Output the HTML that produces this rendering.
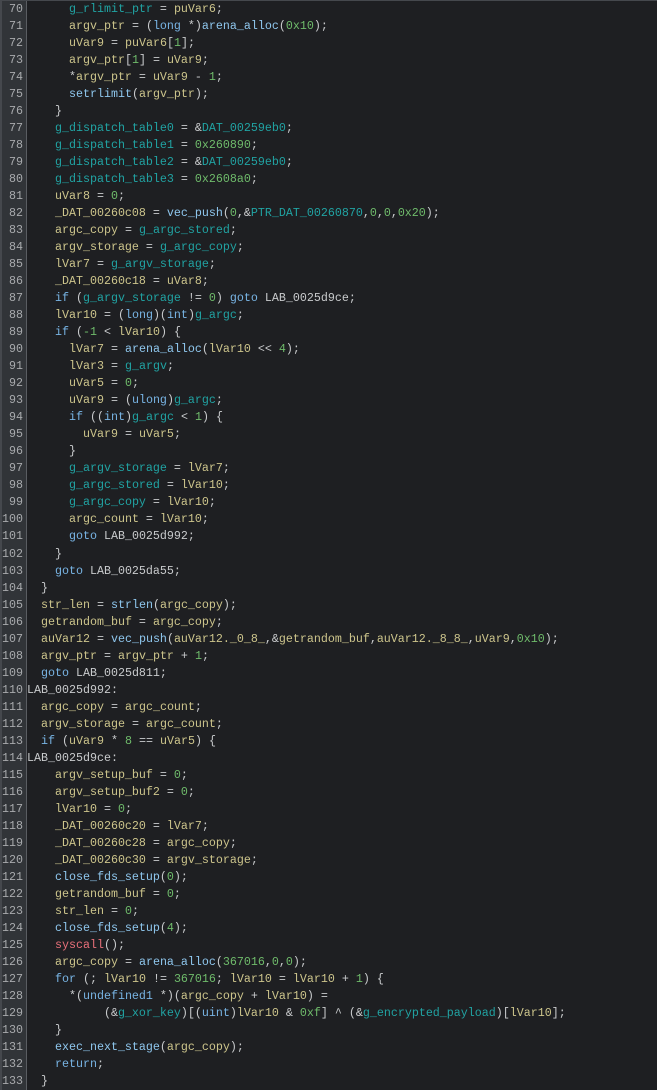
<!DOCTYPE html>
<html><head><meta charset="utf-8"><style>
html,body{margin:0;padding:0;background:#1e1f22;width:657px;height:1090px;overflow:hidden}
#g{position:absolute;left:0;top:0;width:24px;height:1090px;background:#313438;border-left:2px solid #45484d;border-right:1px solid #5a5d62;box-sizing:content-box}
#wrap{position:absolute;left:0;top:1px;font-family:"Liberation Mono",monospace;font-size:11.67px;line-height:17.02px}
.l{display:flex;height:17.02px;white-space:pre}
.n{width:23px;text-align:right;color:#a9abae;padding-right:4px;flex:none}
.c{color:#c9cbcd;white-space:pre}
.v{color:#cdc58c}.f{color:#8fc7ee}.k{color:#78b4e4}.g{color:#21a3a3}.m{color:#6fbb6b}.r{color:#e8707a}
#top{position:absolute;left:0;top:0;width:657px;height:1px;background:#45484d}
</style></head><body>
<div id="g"></div><div id="top"></div>
<div id="wrap"><div class="l"><span class="n">70</span><span class="c">      <span class="g">g_rlimit_ptr</span> = <span class="v">puVar6</span>;</span></div><div class="l"><span class="n">71</span><span class="c">      <span class="v">argv_ptr</span> = (<span class="k">long</span> *)<span class="f">arena_alloc</span>(<span class="m">0x10</span>);</span></div><div class="l"><span class="n">72</span><span class="c">      <span class="v">uVar9</span> = <span class="v">puVar6</span>[<span class="m">1</span>];</span></div><div class="l"><span class="n">73</span><span class="c">      <span class="v">argv_ptr</span>[<span class="m">1</span>] = <span class="v">uVar9</span>;</span></div><div class="l"><span class="n">74</span><span class="c">      *<span class="v">argv_ptr</span> = <span class="v">uVar9</span> - <span class="m">1</span>;</span></div><div class="l"><span class="n">75</span><span class="c">      <span class="f">setrlimit</span>(<span class="v">argv_ptr</span>);</span></div><div class="l"><span class="n">76</span><span class="c">    }</span></div><div class="l"><span class="n">77</span><span class="c">    <span class="g">g_dispatch_table0</span> = &amp;<span class="g">DAT_00259eb0</span>;</span></div><div class="l"><span class="n">78</span><span class="c">    <span class="g">g_dispatch_table1</span> = <span class="m">0x260890</span>;</span></div><div class="l"><span class="n">79</span><span class="c">    <span class="g">g_dispatch_table2</span> = &amp;<span class="g">DAT_00259eb0</span>;</span></div><div class="l"><span class="n">80</span><span class="c">    <span class="g">g_dispatch_table3</span> = <span class="m">0x2608a0</span>;</span></div><div class="l"><span class="n">81</span><span class="c">    <span class="v">uVar8</span> = <span class="m">0</span>;</span></div><div class="l"><span class="n">82</span><span class="c">    <span class="v">_DAT_00260c08</span> = <span class="f">vec_push</span>(<span class="m">0</span>,&amp;<span class="g">PTR_DAT_00260870</span>,<span class="m">0</span>,<span class="m">0</span>,<span class="m">0x20</span>);</span></div><div class="l"><span class="n">83</span><span class="c">    <span class="v">argc_copy</span> = <span class="g">g_argc_stored</span>;</span></div><div class="l"><span class="n">84</span><span class="c">    <span class="v">argv_storage</span> = <span class="g">g_argc_copy</span>;</span></div><div class="l"><span class="n">85</span><span class="c">    <span class="v">lVar7</span> = <span class="g">g_argv_storage</span>;</span></div><div class="l"><span class="n">86</span><span class="c">    <span class="v">_DAT_00260c18</span> = <span class="v">uVar8</span>;</span></div><div class="l"><span class="n">87</span><span class="c">    <span class="k">if</span> (<span class="g">g_argv_storage</span> != <span class="m">0</span>) <span class="k">goto</span> LAB_0025d9ce;</span></div><div class="l"><span class="n">88</span><span class="c">    <span class="v">lVar10</span> = (<span class="k">long</span>)(<span class="k">int</span>)<span class="g">g_argc</span>;</span></div><div class="l"><span class="n">89</span><span class="c">    <span class="k">if</span> (<span class="m">-1</span> &lt; <span class="v">lVar10</span>) {</span></div><div class="l"><span class="n">90</span><span class="c">      <span class="v">lVar7</span> = <span class="f">arena_alloc</span>(<span class="v">lVar10</span> &lt;&lt; <span class="m">4</span>);</span></div><div class="l"><span class="n">91</span><span class="c">      <span class="v">lVar3</span> = <span class="g">g_argv</span>;</span></div><div class="l"><span class="n">92</span><span class="c">      <span class="v">uVar5</span> = <span class="m">0</span>;</span></div><div class="l"><span class="n">93</span><span class="c">      <span class="v">uVar9</span> = (<span class="k">ulong</span>)<span class="g">g_argc</span>;</span></div><div class="l"><span class="n">94</span><span class="c">      <span class="k">if</span> ((<span class="k">int</span>)<span class="g">g_argc</span> &lt; <span class="m">1</span>) {</span></div><div class="l"><span class="n">95</span><span class="c">        <span class="v">uVar9</span> = <span class="v">uVar5</span>;</span></div><div class="l"><span class="n">96</span><span class="c">      }</span></div><div class="l"><span class="n">97</span><span class="c">      <span class="g">g_argv_storage</span> = <span class="v">lVar7</span>;</span></div><div class="l"><span class="n">98</span><span class="c">      <span class="g">g_argc_stored</span> = <span class="v">lVar10</span>;</span></div><div class="l"><span class="n">99</span><span class="c">      <span class="g">g_argc_copy</span> = <span class="v">lVar10</span>;</span></div><div class="l"><span class="n">100</span><span class="c">      <span class="v">argc_count</span> = <span class="v">lVar10</span>;</span></div><div class="l"><span class="n">101</span><span class="c">      <span class="k">goto</span> LAB_0025d992;</span></div><div class="l"><span class="n">102</span><span class="c">    }</span></div><div class="l"><span class="n">103</span><span class="c">    <span class="k">goto</span> LAB_0025da55;</span></div><div class="l"><span class="n">104</span><span class="c">  }</span></div><div class="l"><span class="n">105</span><span class="c">  <span class="v">str_len</span> = <span class="f">strlen</span>(<span class="v">argc_copy</span>);</span></div><div class="l"><span class="n">106</span><span class="c">  <span class="v">getrandom_buf</span> = <span class="v">argc_copy</span>;</span></div><div class="l"><span class="n">107</span><span class="c">  <span class="v">auVar12</span> = <span class="f">vec_push</span>(<span class="v">auVar12._0_8_</span>,&amp;<span class="v">getrandom_buf</span>,<span class="v">auVar12._8_8_</span>,<span class="v">uVar9</span>,<span class="m">0x10</span>);</span></div><div class="l"><span class="n">108</span><span class="c">  <span class="v">argv_ptr</span> = <span class="v">argv_ptr</span> + <span class="m">1</span>;</span></div><div class="l"><span class="n">109</span><span class="c">  <span class="k">goto</span> LAB_0025d811;</span></div><div class="l"><span class="n">110</span><span class="c">LAB_0025d992:</span></div><div class="l"><span class="n">111</span><span class="c">  <span class="v">argc_copy</span> = <span class="v">argc_count</span>;</span></div><div class="l"><span class="n">112</span><span class="c">  <span class="v">argv_storage</span> = <span class="v">argc_count</span>;</span></div><div class="l"><span class="n">113</span><span class="c">  <span class="k">if</span> (<span class="v">uVar9</span> * <span class="m">8</span> == <span class="v">uVar5</span>) {</span></div><div class="l"><span class="n">114</span><span class="c">LAB_0025d9ce:</span></div><div class="l"><span class="n">115</span><span class="c">    <span class="v">argv_setup_buf</span> = <span class="m">0</span>;</span></div><div class="l"><span class="n">116</span><span class="c">    <span class="v">argv_setup_buf2</span> = <span class="m">0</span>;</span></div><div class="l"><span class="n">117</span><span class="c">    <span class="v">lVar10</span> = <span class="m">0</span>;</span></div><div class="l"><span class="n">118</span><span class="c">    <span class="v">_DAT_00260c20</span> = <span class="v">lVar7</span>;</span></div><div class="l"><span class="n">119</span><span class="c">    <span class="v">_DAT_00260c28</span> = <span class="v">argc_copy</span>;</span></div><div class="l"><span class="n">120</span><span class="c">    <span class="v">_DAT_00260c30</span> = <span class="v">argv_storage</span>;</span></div><div class="l"><span class="n">121</span><span class="c">    <span class="f">close_fds_setup</span>(<span class="m">0</span>);</span></div><div class="l"><span class="n">122</span><span class="c">    <span class="v">getrandom_buf</span> = <span class="m">0</span>;</span></div><div class="l"><span class="n">123</span><span class="c">    <span class="v">str_len</span> = <span class="m">0</span>;</span></div><div class="l"><span class="n">124</span><span class="c">    <span class="f">close_fds_setup</span>(<span class="m">4</span>);</span></div><div class="l"><span class="n">125</span><span class="c">    <span class="r">syscall</span>();</span></div><div class="l"><span class="n">126</span><span class="c">    <span class="v">argc_copy</span> = <span class="f">arena_alloc</span>(<span class="m">367016</span>,<span class="m">0</span>,<span class="m">0</span>);</span></div><div class="l"><span class="n">127</span><span class="c">    <span class="k">for</span> (; <span class="v">lVar10</span> != <span class="m">367016</span>; <span class="v">lVar10</span> = <span class="v">lVar10</span> + <span class="m">1</span>) {</span></div><div class="l"><span class="n">128</span><span class="c">      *(<span class="k">undefined1</span> *)(<span class="v">argc_copy</span> + <span class="v">lVar10</span>) =</span></div><div class="l"><span class="n">129</span><span class="c">           (&amp;<span class="g">g_xor_key</span>)[(<span class="k">uint</span>)<span class="v">lVar10</span> &amp; <span class="m">0xf</span>] ^ (&amp;<span class="g">g_encrypted_payload</span>)[<span class="v">lVar10</span>];</span></div><div class="l"><span class="n">130</span><span class="c">    }</span></div><div class="l"><span class="n">131</span><span class="c">    <span class="f">exec_next_stage</span>(<span class="v">argc_copy</span>);</span></div><div class="l"><span class="n">132</span><span class="c">    <span class="k">return</span>;</span></div><div class="l"><span class="n">133</span><span class="c">  }</span></div></div>
</body></html>
